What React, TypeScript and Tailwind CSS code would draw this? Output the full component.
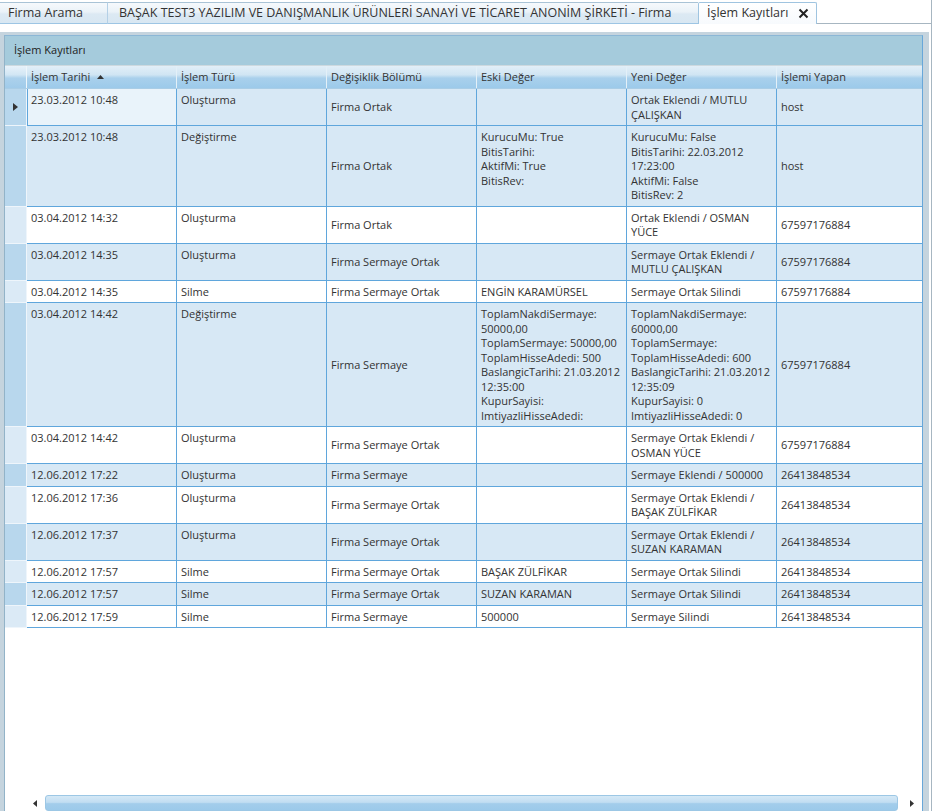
import React from 'react'

type Row = {
  date: string
  type: string
  section: string
  oldVal: string[]
  newVal: string[]
  user: string
}

const rows: Row[] = [
  { date: '23.03.2012 10:48', type: 'Oluşturma', section: 'Firma Ortak', oldVal: [], newVal: ['Ortak Eklendi / MUTLU', 'ÇALIŞKAN'], user: 'host' },
  {
    date: '23.03.2012 10:48',
    type: 'Değiştirme',
    section: 'Firma Ortak',
    oldVal: ['KurucuMu: True', 'BitisTarihi:', 'AktifMi: True', 'BitisRev:'],
    newVal: ['KurucuMu: False', 'BitisTarihi: 22.03.2012', '17:23:00', 'AktifMi: False', 'BitisRev: 2'],
    user: 'host',
  },
  { date: '03.04.2012 14:32', type: 'Oluşturma', section: 'Firma Ortak', oldVal: [], newVal: ['Ortak Eklendi / OSMAN', 'YÜCE'], user: '67597176884' },
  { date: '03.04.2012 14:35', type: 'Oluşturma', section: 'Firma Sermaye Ortak', oldVal: [], newVal: ['Sermaye Ortak Eklendi /', 'MUTLU ÇALIŞKAN'], user: '67597176884' },
  { date: '03.04.2012 14:35', type: 'Silme', section: 'Firma Sermaye Ortak', oldVal: ['ENGİN KARAMÜRSEL'], newVal: ['Sermaye Ortak Silindi'], user: '67597176884' },
  {
    date: '03.04.2012 14:42',
    type: 'Değiştirme',
    section: 'Firma Sermaye',
    oldVal: ['ToplamNakdiSermaye:', '50000,00', 'ToplamSermaye: 50000,00', 'ToplamHisseAdedi: 500', 'BaslangicTarihi: 21.03.2012', '12:35:00', 'KupurSayisi:', 'ImtiyazliHisseAdedi:'],
    newVal: ['ToplamNakdiSermaye:', '60000,00', 'ToplamSermaye:', 'ToplamHisseAdedi: 600', 'BaslangicTarihi: 21.03.2012', '12:35:09', 'KupurSayisi: 0', 'ImtiyazliHisseAdedi: 0'],
    user: '67597176884',
  },
  { date: '03.04.2012 14:42', type: 'Oluşturma', section: 'Firma Sermaye Ortak', oldVal: [], newVal: ['Sermaye Ortak Eklendi /', 'OSMAN YÜCE'], user: '67597176884' },
  { date: '12.06.2012 17:22', type: 'Oluşturma', section: 'Firma Sermaye', oldVal: [], newVal: ['Sermaye Eklendi / 500000'], user: '26413848534' },
  { date: '12.06.2012 17:36', type: 'Oluşturma', section: 'Firma Sermaye Ortak', oldVal: [], newVal: ['Sermaye Ortak Eklendi /', 'BAŞAK ZÜLFİKAR'], user: '26413848534' },
  { date: '12.06.2012 17:37', type: 'Oluşturma', section: 'Firma Sermaye Ortak', oldVal: [], newVal: ['Sermaye Ortak Eklendi /', 'SUZAN KARAMAN'], user: '26413848534' },
  { date: '12.06.2012 17:57', type: 'Silme', section: 'Firma Sermaye Ortak', oldVal: ['BAŞAK ZÜLFİKAR'], newVal: ['Sermaye Ortak Silindi'], user: '26413848534' },
  { date: '12.06.2012 17:57', type: 'Silme', section: 'Firma Sermaye Ortak', oldVal: ['SUZAN KARAMAN'], newVal: ['Sermaye Ortak Silindi'], user: '26413848534' },
  { date: '12.06.2012 17:59', type: 'Silme', section: 'Firma Sermaye', oldVal: ['500000'], newVal: ['Sermaye Silindi'], user: '26413848534' },
]

const headers = ['İşlem Tarihi', 'İşlem Türü', 'Değişiklik Bölümü', 'Eski Değer', 'Yeni Değer', 'İşlemi Yapan']

function Lines({ lines }: { lines: string[] }) {
  return (
    <>
      {lines.map((l, i) => (
        <div key={i} className="whitespace-nowrap">
          {l}
        </div>
      ))}
    </>
  )
}

function GridRow({ row, index }: { row: Row; index: number }) {
  const selected = index === 0
  const blue = selected || index % 2 === 1
  const cell = 'shrink-0 border-b border-r border-[#5fa6dc] pt-[4px] pb-[3px] pl-[4px] pr-[2px]'
  const mid = `${cell} flex flex-col justify-center`
  return (
    <div className={`flex leading-[14.5px] ${blue ? 'bg-[#d7e8f5]' : 'bg-white'}`}>
      {/* row indicator */}
      <div
        className={`w-[22px] shrink-0 border-r border-b border-[#eef5fb] flex items-center justify-center ${
          blue ? 'bg-[#b8d7ed]' : 'bg-[#dbeaf6]'
        }`}
      >
        {selected && (
          <svg width="5" height="8" viewBox="0 0 5 8">
            <polygon points="0,0 5,4 0,8" fill="#333" />
          </svg>
        )}
      </div>
      <div className={`${cell} w-[150px] ${selected ? 'bg-[#e9f3fa] shadow-[inset_1px_0_0_0_#5fa6dc]' : ''}`}>{row.date}</div>
      <div className={`${cell} w-[150px]`}>{row.type}</div>
      <div className={`${mid} w-[150px]`}>{row.section}</div>
      <div className={`${cell} w-[150px]`}>
        <Lines lines={row.oldVal} />
      </div>
      <div className={`${cell} w-[150px]`}>
        <Lines lines={row.newVal} />
      </div>
      <div className={`${mid} flex-1 border-r-0`}>{row.user}</div>
    </div>
  )
}

export default function App() {
  return (
    <div className="w-[934px] h-[811px] overflow-hidden bg-white flex flex-col font-['Open_Sans','Noto_Sans',sans-serif] text-[#333]">
      {/* Tabs */}
      <div className="h-[24px] w-[932px] shrink-0 flex items-end text-[12.5px]">
        <div className="w-[108px] h-[22px] shrink-0 flex items-center pl-[8px] border-t border-b border-r border-t-[#a9c3d6] border-b-[#9dc5e4] border-r-[#b4d0e6] bg-[linear-gradient(#f6f9fc,#eaf2f8_45%,#dce9f3_55%,#d8e7f2)]">
          Firma Arama
        </div>
        <div className="w-[590px] h-[22px] shrink-0 flex items-center pl-[11px] whitespace-nowrap overflow-hidden border-t border-b border-t-[#a9c3d6] border-b-[#9dc5e4] bg-[linear-gradient(#f6f9fc,#eaf2f8_45%,#dce9f3_55%,#d8e7f2)]">
          BAŞAK TEST3 YAZILIM VE DANIŞMANLIK ÜRÜNLERİ SANAYİ VE TİCARET ANONİM ŞİRKETİ - Firma
        </div>
        <div className="w-[119px] h-[22px] shrink-0 flex items-center pl-[8px] border-t border-l border-r border-[#9fc4e0] rounded-t-[2px] bg-[linear-gradient(#ffffff,#f7fafd)]">
          <span>İşlem Kayıtları</span>
          <svg width="11" height="11" viewBox="0 0 11 11" className="ml-[10px]">
            <path d="M1.5 1.5 L9.5 9.5 M9.5 1.5 L1.5 9.5" stroke="#222" strokeWidth="2" />
          </svg>
        </div>
        <div className="flex-1 h-[24px] border-b border-r border-[#a7b6c1]" />
      </div>

      {/* Content frame */}
      <div className="flex-1 min-h-0 w-[932px] border-r border-[#a7b6c1] pt-[8px] pr-[2px] flex flex-col">
        <div className="flex-1 min-h-0 bg-[#c5d4de] pt-[3px] pl-[4px] pr-[6px] flex flex-col">
          <div className="flex-1 min-h-0 bg-white border-t border-l border-r border-t-[#8cb7d6] border-l-[#92b3c8] border-r-[#68a7d9] flex flex-col text-[11px]">
            {/* Title band */}
            <div className="h-[30px] shrink-0 bg-[#a5cbdc] border-b border-[#cdd9df] flex items-center pl-[9px] text-[#222]">
              İşlem Kayıtları
            </div>

            {/* Column headers */}
            <div className="h-[23px] shrink-0 flex border-b border-[#a9cde6] bg-[linear-gradient(#e2eff8,#d0e5f3_40%,#a9d0ec_55%,#9ccaea)]">
              <div className="w-[22px] shrink-0 border-r border-[#eef6fb] bg-[linear-gradient(#e8f2fa,#d2e6f4_40%,#acd1ec_55%,#a0cbea)]" />
              {headers.map((h, i) => (
                <div
                  key={h}
                  className={`${i === 5 ? 'flex-1' : 'w-[150px] border-r border-[#e3f0f8]'} shrink-0 flex items-center pl-[4px]`}
                >
                  <span>{h}</span>
                  {i === 0 && (
                    <svg width="7" height="4" viewBox="0 0 7 4" className="ml-[7px]">
                      <polygon points="0,4 3.5,0 7,4" fill="#333" />
                    </svg>
                  )}
                </div>
              ))}
            </div>

            {/* Rows */}
            <div className="shrink-0 flex flex-col">
              {rows.map((r, i) => (
                <GridRow key={i} row={r} index={i} />
              ))}
            </div>

            <div className="flex-1" />

            {/* Horizontal scrollbar */}
            <div className="h-[17px] shrink-0 flex items-start pt-[1px] pl-[22px]">
              <div className="w-[18px] h-[16px] flex items-center pl-[6px]">
                <svg width="4" height="7" viewBox="0 0 4 7">
                  <polygon points="4,0 0,3.5 4,7" fill="#333" />
                </svg>
              </div>
              <div className="flex-1 h-[16px] rounded-[3px] border border-[#9cc7e5] bg-[linear-gradient(#d4e8f6,#c2def2_45%,#a3cdeb_55%,#9ccaea)]" />
              <div className="w-[24px] h-[16px] flex items-center pl-[12px]">
                <svg width="4" height="7" viewBox="0 0 4 7">
                  <polygon points="0,0 4,3.5 0,7" fill="#333" />
                </svg>
              </div>
            </div>
          </div>
        </div>
      </div>
    </div>
  )
}
